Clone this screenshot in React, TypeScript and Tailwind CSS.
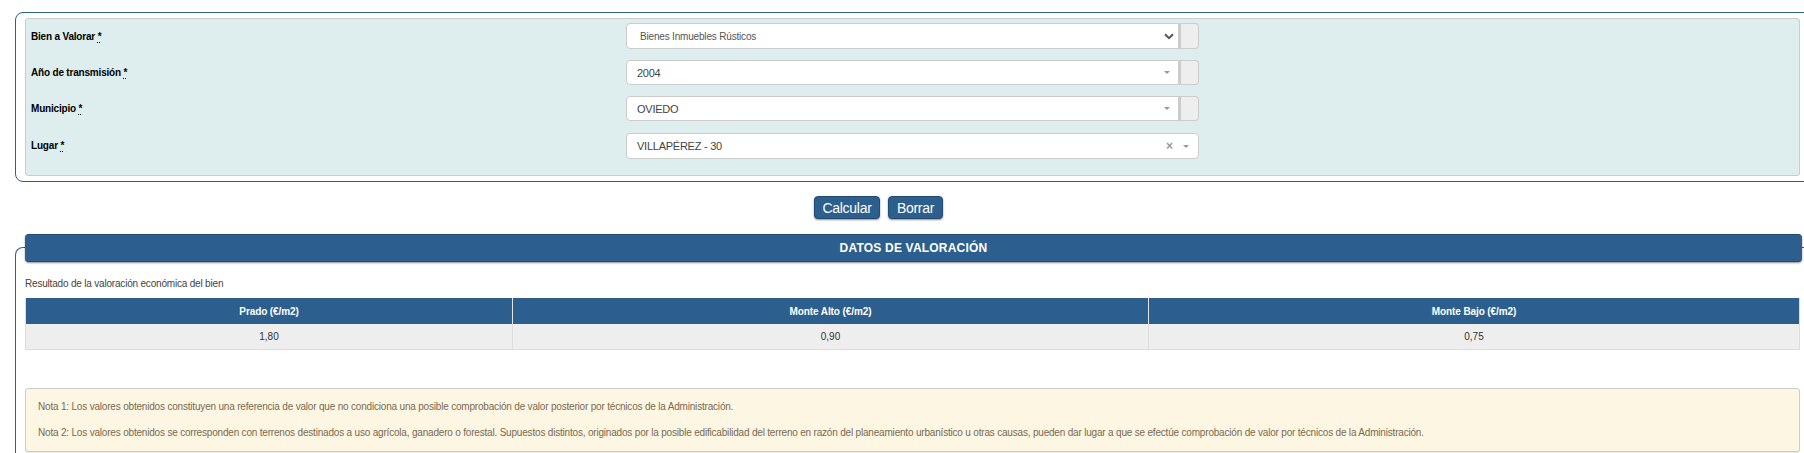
const font = { fontFamily: '"Liberation Sans", Arial, sans-serif' };

const Label = ({ text }: { text: string }) => (
  <label className="text-[10px] font-bold leading-none tracking-[-0.19px] text-black">
    {text}{" "}
    <abbr className="underline decoration-dotted underline-offset-2">*</abbr>
  </label>
);

const Caret = () => (
  <span className="h-0 w-0 border-x-[3px] border-t-[3px] border-x-transparent border-t-[#999]" />
);

const Chevron = () => (
  <svg width="10" height="7" viewBox="0 0 10 7" className="text-[#555]">
    <path d="M1 1.2 5 5.2l4-4" fill="none" stroke="currentColor" strokeWidth="2" />
  </svg>
);

const Addon = () => (
  <span className="h-full w-[20px] rounded-r-[4px] border border-l-2 border-[#ccc] bg-[#eee]" />
);

const FieldRow = ({
  label,
  children,
  rowClass = "",
  labelClass = "-translate-y-[2px]",
}: {
  label: string;
  children: React.ReactNode;
  rowClass?: string;
  labelClass?: string;
}) => (
  <div className={`flex items-center ${rowClass}`}>
    <div className={`w-[600px] shrink-0 pl-[5px] ${labelClass}`}>
      <Label text={label} />
    </div>
    <div className="flex h-full w-[573px]">{children}</div>
  </div>
);

const ComboBox = ({ value, small }: { value: string; small?: boolean }) => (
  <div
    className={`flex h-full flex-1 items-center justify-between rounded-l-[4px] border border-[#ccc] bg-white pl-[10px] ${small ? "pr-[4px]" : "pr-[8px]"}`}
  >
    {small ? (
      <span className="pl-[3px] text-[10px] tracking-[-0.18px] text-[#555]">{value}</span>
    ) : (
      <span className="translate-y-px text-[11px] tracking-[-0.25px] text-[#444]">{value}</span>
    )}
    {small ? <Chevron /> : <Caret />}
  </div>
);

const headers = ["Prado (€/m2)", "Monte Alto (€/m2)", "Monte Bajo (€/m2)"];
const values = ["1,80", "0,90", "0,75"];
const colWidths = ["w-[487px]", "w-[636px]", "flex-1"];

export default function App() {
  return (
    <div style={font} className="h-[453px] w-[1804px] overflow-hidden bg-white pl-[15px] pt-3">
      <section className="h-[170px] w-[1800px] rounded-l-[8px] border border-[#2d5f8e] pl-[9px] pt-[5px]">
        <div className="flex h-[158px] w-[1775px] flex-col rounded-[3px] border border-[#ccc] bg-[#deeded] pt-1">
          <FieldRow label="Bien a Valorar" rowClass="mb-[11px] h-[26px]" labelClass="-translate-y-px">
            <ComboBox value="Bienes Inmuebles Rústicos" small />
            <Addon />
          </FieldRow>
          <FieldRow label="Año de transmisión" rowClass="mb-[11px] h-[25px]">
            <ComboBox value="2004" />
            <Addon />
          </FieldRow>
          <FieldRow label="Municipio" rowClass="mb-[12px] h-[25px]">
            <ComboBox value="OVIEDO" />
            <Addon />
          </FieldRow>
          <FieldRow label="Lugar" rowClass="h-[26px]">
            <div className="flex h-full flex-1 items-center justify-between rounded-[4px] border border-[#ccc] bg-white pl-[10px] pr-[9px]">
              <span className="text-[11px] tracking-[-0.25px] text-[#444]">VILLAPÉREZ - 30</span>
              <span className="flex items-center gap-[10px]">
                <span className="text-[12px] font-bold leading-none text-[#999]">×</span>
                <Caret />
              </span>
            </div>
          </FieldRow>
        </div>
      </section>

      <div className="flex h-[51px] items-center justify-center gap-2 pr-[62px]">
        <button className="h-[23px] w-[66px] rounded-[4px] border border-[#234b72] bg-[#2d5f8e] text-[14px] leading-none tracking-[-0.28px] text-white shadow-[0_1px_2px_rgba(0,0,0,0.45)]">
          Calcular
        </button>
        <button className="h-[23px] w-[55px] rounded-[4px] border border-[#234b72] bg-[#2d5f8e] text-[14px] leading-none tracking-[-0.28px] text-white shadow-[0_1px_2px_rgba(0,0,0,0.45)]">
          Borrar
        </button>
      </div>

      <section className="mt-[14px] h-[300px] w-[1800px] rounded-tl-[8px] border-l border-t border-[#2d5f8e] pl-[9px]">
        <div className="-mt-[14px] flex h-[28px] w-[1777px] items-center justify-center rounded-[4px] border-y border-[#234b72] bg-[#2d5f8e] text-[12px] font-bold tracking-[0.2px] text-white shadow-[0_1px_2px_rgba(0,0,0,0.45)]">
          DATOS DE VALORACIÓN
        </div>

        <p className="mt-[16px] text-[10px] leading-[12px] tracking-[-0.19px] text-[#444]">
          Resultado de la valoración económica del bien
        </p>

        <div className="mt-[8px] w-[1775px] border-x border-b border-[#ddd]">
          <div className="flex h-[26px] bg-[#2d5f8e] text-[10px] font-bold tracking-[-0.1px] text-white">
            {headers.map((h, i) => (
              <div
                key={h}
                className={`flex items-center justify-center border-[#e5e5e5] ${colWidths[i]} ${i < 2 ? "border-r" : ""}`}
              >
                {h}
              </div>
            ))}
          </div>
          <div className="flex h-[25px] bg-[#eee] text-[10px] text-[#333]">
            {values.map((v, i) => (
              <div
                key={v}
                className={`flex items-center justify-center border-[#ddd] ${colWidths[i]} ${i < 2 ? "border-r" : ""}`}
              >
                {v}
              </div>
            ))}
          </div>
        </div>

        <div className="mt-[38px] h-[64px] w-[1775px] rounded-[3px] border border-[#ccc] bg-[#fdf6e3] pl-3 pt-[12px] text-[10px] leading-[12px] tracking-[-0.19px] text-[#7a6a50] shadow-[0_1px_1px_rgba(0,0,0,0.1)]">
          <p>
            Nota 1: Los valores obtenidos constituyen una referencia de valor que no condiciona una posible comprobación de valor posterior por técnicos de la Administración.
          </p>
          <p className="mt-[14px]">
            Nota 2: Los valores obtenidos se corresponden con terrenos destinados a uso agrícola, ganadero o forestal. Supuestos distintos, originados por la posible edificabilidad del terreno en razón del planeamiento urbanístico u otras causas, pueden dar lugar a que se efectúe comprobación de valor por técnicos de la Administración.
          </p>
        </div>
      </section>
    </div>
  );
}
